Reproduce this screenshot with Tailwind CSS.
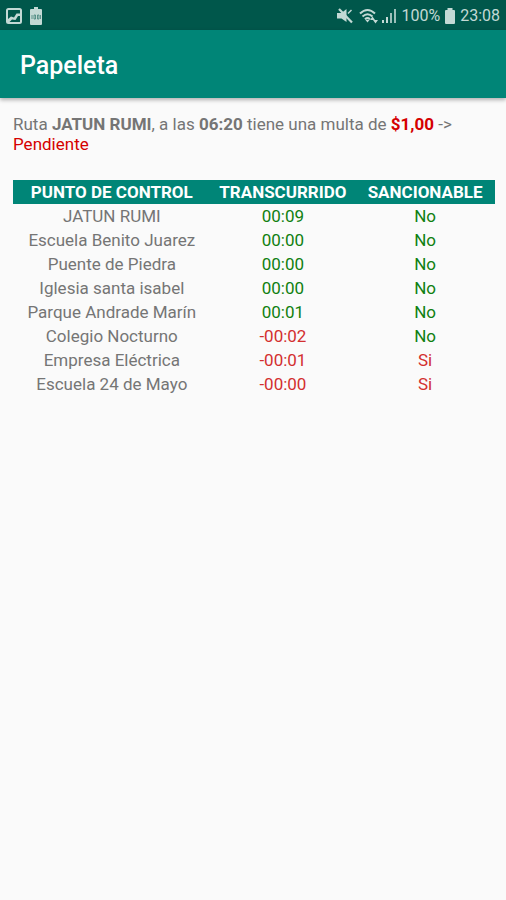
<!DOCTYPE html>
<html lang="es">
<head>
<meta charset="utf-8">
<meta name="viewport" content="width=device-width, initial-scale=1">
<title>Papeleta</title>
<script src="https://cdn.jsdelivr.net/npm/@tailwindcss/browser@4"></script>
</head>
<body class="min-h-screen bg-[#fafafa] font-['Roboto',sans-serif] text-[#757575]">
<div class="flex h-[30px] items-center justify-between bg-[#00574b] px-1.5 pt-0.5 text-[#c3d9d5]">
  <div class="flex items-center gap-2">
    <svg class="size-4" viewBox="0 0 16 16" role="img" aria-label="Imagen"><rect x="1" y="1" width="14" height="14" rx="1.500" fill="none" stroke="currentColor" stroke-width="2"/><path d="M2 14v-3l3-2.500 3 1 2.500-4H14V8h-2l-2.500 4-3.500-.5L3.500 14z" fill="currentColor"/></svg>
    <svg class="h-[18px] w-3" viewBox="0 0 12 18" role="img" aria-label="Batería cargada"><path d="M4 0h4v2h3a1 1 0 0 1 1 1v14a1 1 0 0 1-1 1H1a1 1 0 0 1-1-1V3a1 1 0 0 1 1-1h3z" fill="currentColor"/><path d="M2 8v4M4 8h1.500v4H4zM7.500 8H9v4H7.500zM10.500 8v4" fill="none" stroke="#3f8177" stroke-width=".8"/></svg>
  </div>
  <div class="flex items-center gap-1">
    <svg class="size-4" viewBox="0 0 16 16" role="img" aria-label="Silencio"><path d="M0 5h4.500L9.500 1v13l-5-3.500H0z" fill="currentColor"/><path d="M11 5.500L14.500 2" stroke="currentColor" stroke-width="1.500"/><path d="M2 1l13 13.500" stroke="currentColor" stroke-width="2.200"/></svg>
    <div class="ml-0.5 flex items-center gap-0.5">
      <svg class="h-4 w-5" viewBox="0 0 20 16" role="img" aria-label="Wi-Fi"><g fill="none" stroke="currentColor" stroke-width="2"><path d="M1 5.500Q8.500-1.500 16 5.500"/><path d="M3.500 8.500q5-4.500 10 0"/><path d="M6 11.200q2.500-2.200 5 0"/></g><path d="M8.500 14.500l-2-2.500h4zM11 12l2.500-3.500L16 12zM14 12h5l-2.500 3.500z" fill="currentColor"/></svg>
      <svg class="size-4" viewBox="0 0 16 16" role="img" aria-label="Señal"><path d="M1 12h2v3H1zM5 9h2v6H5z" fill="currentColor"/><path d="M9 5h2v10H9zM13 1h2v14h-2z" fill="currentColor" opacity=".8"/></svg>
    </div>
    <span class="text-[16px] leading-5">100%</span>
    <svg class="h-4 w-3" viewBox="0 0 12 16" role="img" aria-label="Batería"><path d="M3.500 0h5v2H10a1 1 0 0 1 1 1v12a1 1 0 0 1-1 1H2a1 1 0 0 1-1-1V3a1 1 0 0 1 1-1h1.500z" fill="currentColor"/></svg>
    <time class="text-[16px] leading-5">23:08</time>
  </div>
</div>
<header class="flex h-[68px] items-center bg-[#008577] px-5 pt-1 shadow-[0_2px_4px_rgba(0,0,0,0.3)]">
  <h1 class="text-[25px] leading-7 font-medium text-white">Papeleta</h1>
</header>
<main class="pt-4 pr-[11px] pl-[13px]">
  <p class="text-[17px] leading-5">Ruta <b>JATUN RUMI</b>, a las <b>06:20</b> tiene una multa de <b class="text-[#d50000]">$1,00</b> -&gt; <span class="text-[#d50000]">Pendiente</span></p>
  <table class="mt-[26px] w-full table-fixed text-center text-[17px] leading-6">
    <colgroup><col class="w-[41%]"><col class="w-[30%]"><col class="w-[29%]"></colgroup>
    <thead class="bg-[#008577] text-white"><tr><th>PUNTO DE CONTROL</th><th>TRANSCURRIDO</th><th>SANCIONABLE</th></tr></thead>
    <tbody class="text-[#108010]">
      <tr><td class="text-[#757575]">JATUN RUMI</td><td>00:09</td><td>No</td></tr>
      <tr><td class="text-[#757575]">Escuela Benito Juarez</td><td>00:00</td><td>No</td></tr>
      <tr><td class="text-[#757575]">Puente de Piedra</td><td>00:00</td><td>No</td></tr>
      <tr><td class="text-[#757575]">Iglesia santa isabel</td><td>00:00</td><td>No</td></tr>
      <tr><td class="text-[#757575]">Parque Andrade Marín</td><td>00:01</td><td>No</td></tr>
      <tr><td class="text-[#757575]">Colegio Nocturno</td><td class="text-[#d32f2f]">-00:02</td><td>No</td></tr>
      <tr><td class="text-[#757575]">Empresa Eléctrica</td><td class="text-[#d32f2f]">-00:01</td><td class="text-[#d32f2f]">Si</td></tr>
      <tr><td class="text-[#757575]">Escuela 24 de Mayo</td><td class="text-[#d32f2f]">-00:00</td><td class="text-[#d32f2f]">Si</td></tr>
    </tbody>
  </table>
</main>
</body>
</html>
